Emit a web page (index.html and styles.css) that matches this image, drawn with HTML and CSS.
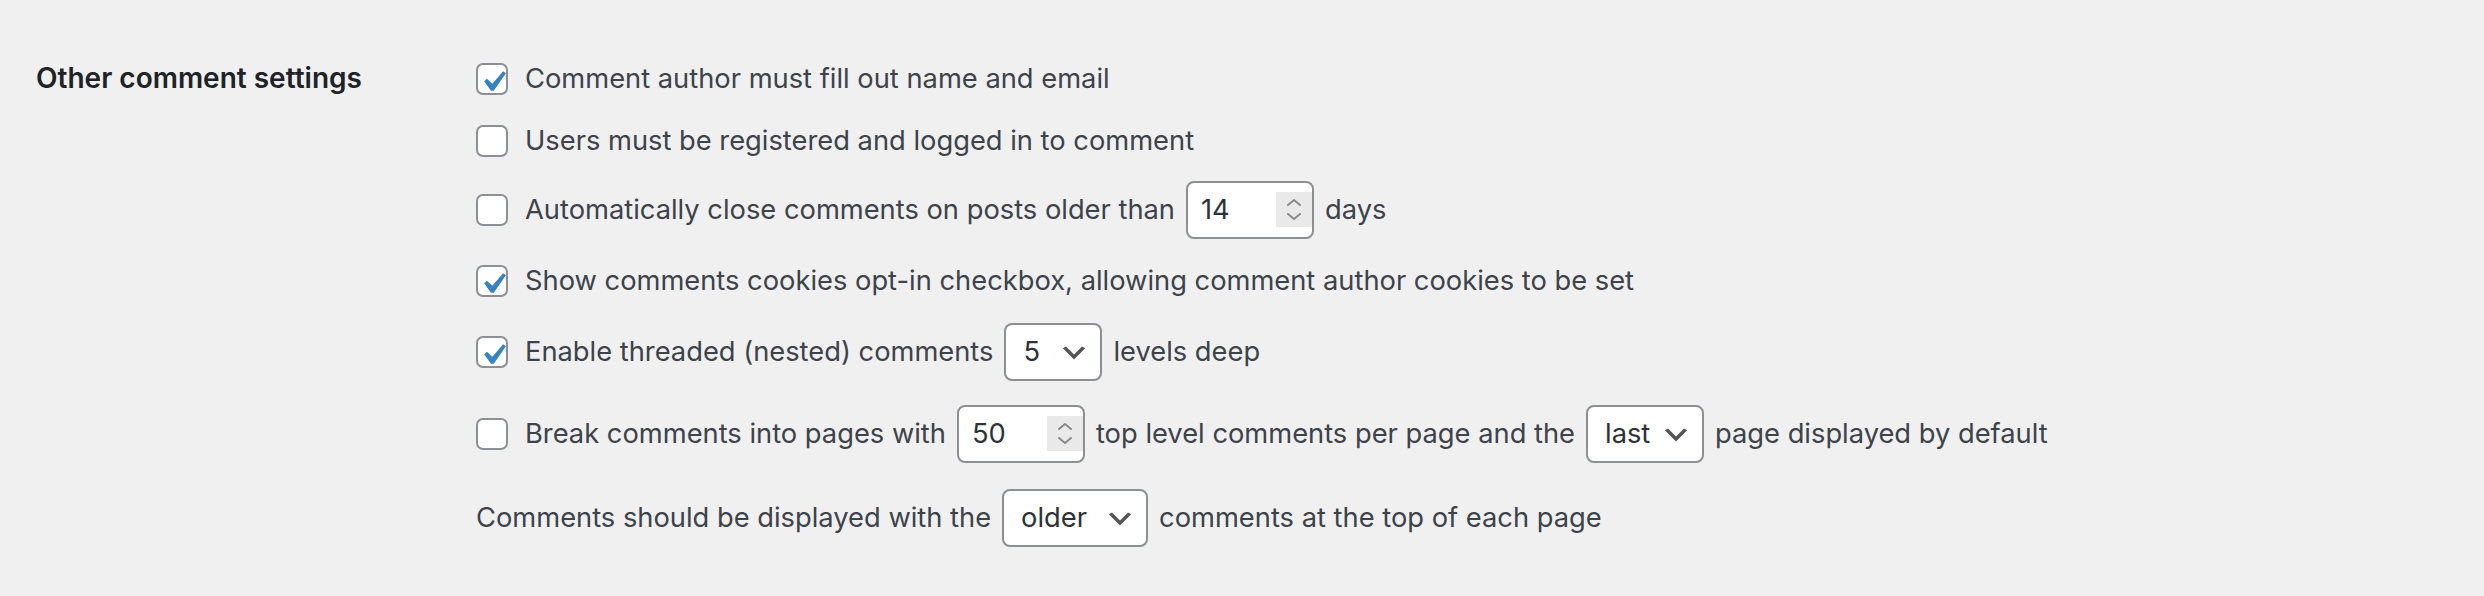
FILE: index.html
```html
<!DOCTYPE html>
<html lang="en">
<head>
<meta charset="utf-8">
<title>Discussion Settings</title>
<link rel="stylesheet" href="styles.css">
</head>
<body>
<div class="wrap">
  <div class="form-row">
    <div class="th">Other comment settings</div>
    <div class="td">
      <div class="opt">
        <span class="cb checked"><svg viewBox="0 0 20 20"><path d="M14.83 4.89l1.34.94-5.81 8.38H9.02L5.78 9.67l1.34-1.25 2.57 2.4z"/></svg></span>
        <span class="txt">Comment author must fill out name and email</span>
      </div>
      <div class="opt opt-second">
        <span class="cb"></span>
        <span class="txt">Users must be registered and logged in to comment</span>
      </div>
      <div class="opt tall">
        <span class="cb"></span>
        <span class="txt">Automatically close comments on posts older than</span>
        <span class="num">14<span class="spin"><svg viewBox="0 0 36 35"><path d="M12 13l6-5 6 5M12 22l6 5 6-5"/></svg></span></span>
        <span class="txt">days</span>
      </div>
      <div class="opt">
        <span class="cb checked"><svg viewBox="0 0 20 20"><path d="M14.83 4.89l1.34.94-5.81 8.38H9.02L5.78 9.67l1.34-1.25 2.57 2.4z"/></svg></span>
        <span class="txt">Show comments cookies opt-in checkbox, allowing comment author cookies to be set</span>
      </div>
      <div class="opt tall">
        <span class="cb checked"><svg viewBox="0 0 20 20"><path d="M14.83 4.89l1.34.94-5.81 8.38H9.02L5.78 9.67l1.34-1.25 2.57 2.4z"/></svg></span>
        <span class="txt">Enable threaded (nested) comments</span>
        <span class="sel sel-levels">5</span>
        <span class="txt">levels deep</span>
      </div>
      <div class="opt tall">
        <span class="cb"></span>
        <span class="txt">Break comments into pages with</span>
        <span class="num">50<span class="spin"><svg viewBox="0 0 36 35"><path d="M12 13l6-5 6 5M12 22l6 5 6-5"/></svg></span></span>
        <span class="txt">top level comments per page and the</span>
        <span class="sel sel-page">last</span>
        <span class="txt">page displayed by default</span>
      </div>
      <div class="opt tall opt-last">
        <span class="txt">Comments should be displayed with the</span>
        <span class="sel sel-order">older</span>
        <span class="txt">comments at the top of each page</span>
      </div>
    </div>
  </div>
</div>
</body>
</html>
```
FILE: styles.css
```css
html, body {
  margin: 0;
  padding: 0;
  background: #f0f0f1;
}

body {
  font-family: Inter, "Liberation Sans", Arial, sans-serif;
  font-size: 27.3px;
  line-height: 36px;
  color: #3c434a;
}

.wrap {
  padding: 60px 0 40px 36px;
}

.form-row {
  display: flex;
  align-items: flex-start;
}

.th {
  flex: 0 0 440px;
  font-size: 28px;
  font-weight: 600;
  color: #1d2327;
}

.td {
  display: flex;
  flex-direction: column;
  gap: 24px;
  padding-top: 1px;
}

.opt {
  display: flex;
  align-items: center;
  white-space: nowrap;
  min-height: 36px;
}

.opt.tall {
  min-height: 58px;
}

.opt-second {
  margin-top: 2px;
  margin-bottom: -2px;
}

.opt-last {
  margin-top: 2px;
}

.cb {
  box-sizing: border-box;
  flex: 0 0 32px;
  width: 32px;
  height: 32px;
  border: 2px solid #8c8f94;
  border-radius: 7px;
  background: #fff;
  margin-right: 17px;
  position: relative;
}

.cb svg {
  position: absolute;
  left: -6px;
  top: -4px;
  width: 42px;
  height: 42px;
  fill: #3582c4;
}

.num,
.sel {
  box-sizing: border-box;
  height: 58px;
  border: 2px solid #8c8f94;
  border-radius: 8px;
  background: #fff;
  color: #2c3338;
  display: flex;
  align-items: center;
  margin: 0 11px;
  position: relative;
}

.num {
  width: 128px;
  padding-left: 13px;
}

.spin {
  position: absolute;
  right: 0;
  top: 9px;
  width: 36px;
  height: 35px;
  background: #e9e9ea;
}

.spin svg {
  width: 36px;
  height: 35px;
  fill: none;
  stroke: #8a8a8a;
  stroke-width: 2;
  stroke-linecap: round;
  stroke-linejoin: round;
}

.sel {
  padding-left: 17px;
  background-image: url("data:image/svg+xml;utf8,%3Csvg%20xmlns%3D%27http%3A%2F%2Fwww.w3.org%2F2000%2Fsvg%27%20viewBox%3D%270%200%2020%2020%27%3E%3Cpath%20d%3D%27M5%206l5%205%205-5%202%201-7%207-7-7%202-1z%27%20fill%3D%27%23555%27%2F%3E%3C%2Fsvg%3E");
  background-repeat: no-repeat;
  background-size: 32px 32px;
  background-position: right 10px top 55%;
}

.sel-levels {
  width: 98px;
}

.sel-page {
  width: 118px;
}

.sel-order {
  width: 146px;
}
```
